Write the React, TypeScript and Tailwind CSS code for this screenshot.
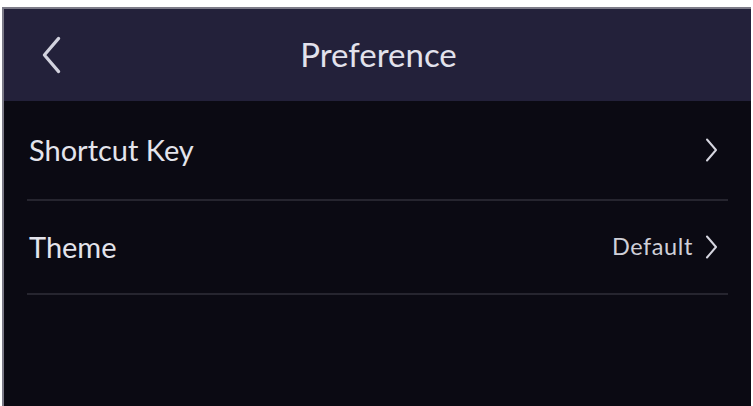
import React from 'react';

const Chevron: React.FC<{ dir: 'left' | 'right'; className?: string }> = ({ dir, className }) => (
  <svg viewBox="0 0 12 24" className={className} fill="none" stroke="currentColor" strokeWidth={2} strokeLinecap="round" strokeLinejoin="round">
    {dir === 'right' ? <path d="M1.5 1.5 L10.5 12 L1.5 22.5" /> : <path d="M10.5 1.5 L1.5 12 L10.5 22.5" />}
  </svg>
);

const Row: React.FC<{ label: string; value?: string; h: string }> = ({ label, value, h }) => (
  <div className={`flex items-center justify-between mx-[23px] border-b-2 border-[#26252f] pl-[2px] pr-[10px] ${h}`}>
    <span className="text-[29px] text-[#e4e4ec]">{label}</span>
    <div className="flex items-center gap-[12px]">
      {value && <span className="text-[23.5px] tracking-[0.6px] text-[#cfcfd8]">{value}</span>}
      <Chevron dir="right" className="w-[13px] h-[24px] text-[#d6d6e0]" />
    </div>
  </div>
);

export default function App() {
  return (
    <div className="w-[753px] h-[406px] bg-white overflow-hidden pt-[7px] pl-[2px]" style={{ fontFamily: 'Lato, "DejaVu Sans", sans-serif' }}>
      <div className="w-[749px] h-[399px] flex flex-col bg-[#0b0a13] border-l-2 border-t-2 border-[#7c7b88]">
        <header className="relative h-[92px] bg-[#23213a] flex items-center justify-center shrink-0">
          <Chevron dir="left" className="absolute left-[38px] top-[27px] w-[19px] h-[38px] text-[#d2d2de]" />
          <h1 className="text-[33px] text-[#e2e2ec] pl-[2px]">Preference</h1>
        </header>
        <Row label="Shortcut Key" h="h-[100px]" />
        <Row label="Theme" value="Default" h="h-[94px]" />
      </div>
    </div>
  );
}
